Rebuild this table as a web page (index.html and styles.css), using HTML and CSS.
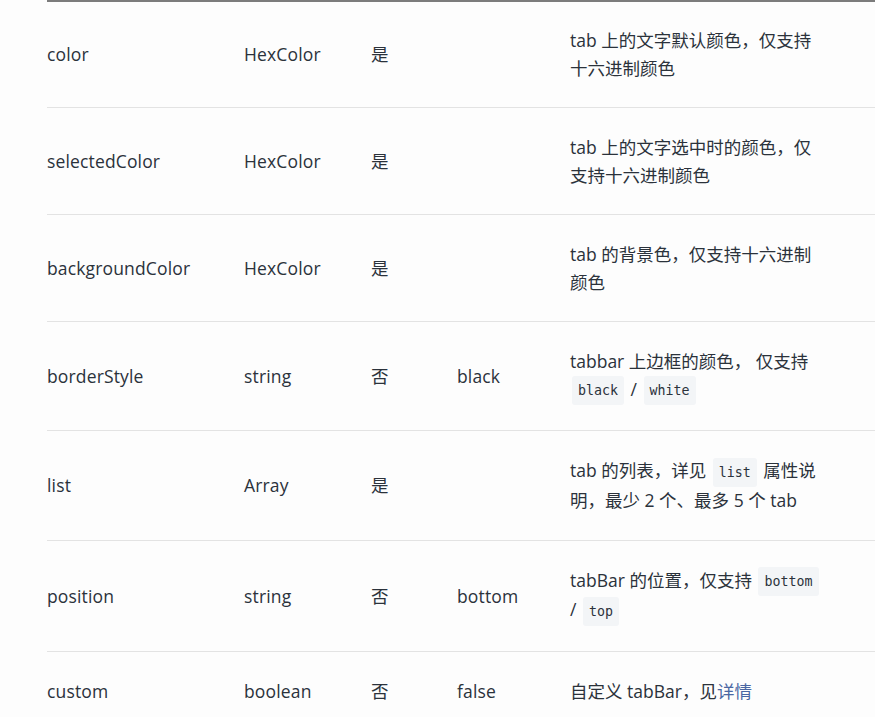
FILE: index.html
```html
<!DOCTYPE html>
<html lang="zh-CN">
<head>
<meta charset="utf-8">
<link rel="stylesheet" href="styles.css">
</head>
<body>
<div class="wrap">
<table class="props">
  <colgroup>
    <col class="c-name"><col class="c-type"><col class="c-req"><col class="c-def"><col class="c-desc">
  </colgroup>
  <tbody>
    <tr><td>color</td><td>HexColor</td><td>是</td><td></td><td><div class="desc">tab 上的文字默认颜色，仅支持十六进制颜色</div></td></tr>
    <tr><td>selectedColor</td><td>HexColor</td><td>是</td><td></td><td><div class="desc">tab 上的文字选中时的颜色，仅支持十六进制颜色</div></td></tr>
    <tr><td>backgroundColor</td><td>HexColor</td><td>是</td><td></td><td><div class="desc">tab 的背景色，仅支持十六进制颜色</div></td></tr>
    <tr><td>borderStyle</td><td>string</td><td>否</td><td>black</td><td><div class="desc">tabbar 上边框的颜色， 仅支持 <code>black</code> / <code>white</code></div></td></tr>
    <tr><td>list</td><td>Array</td><td>是</td><td></td><td><div class="desc">tab 的列表，详见 <code>list</code> 属性说明，最少 2 个、最多 5 个 tab</div></td></tr>
    <tr><td>position</td><td>string</td><td>否</td><td>bottom</td><td><div class="desc">tabBar 的位置，仅支持 <code>bottom</code> / <code>top</code></div></td></tr>
    <tr><td>custom</td><td>boolean</td><td>否</td><td>false</td><td><div class="desc">自定义 tabBar，见<a href="#">详情</a></div></td></tr>
  </tbody>
</table>
</div>
</body>
</html>
```
FILE: styles.css
```css
html, body {
  margin: 0;
  padding: 0;
  background: #fdfdfd;
  overflow: hidden;
}
body {
  font-family: "Open Sans", "Noto Sans CJK SC", sans-serif;
  font-size: 17.5px;
  line-height: 27.5px;
  color: #2b323b;
}
.wrap {
  padding-left: 47px;
}
.props {
  width: 828px;
  table-layout: fixed;
  border-collapse: collapse;
  border-top: 2px solid #7c7c7c;
}
.c-name { width: 197px; }
.c-type { width: 127px; }
.c-req { width: 86px; }
.c-def { width: 113px; }
.c-desc { width: 305px; }
.props td {
  padding: 26px 0 25px 0;
  vertical-align: middle;
  border-bottom: 1px solid #e3e3e3;
  white-space: nowrap;
  letter-spacing: 0.15px;
}
.props tr:first-child td {
  padding-top: 25px;
}
.props td .desc {
  width: 252px;
  white-space: normal;
  letter-spacing: 0;
}
code {
  display: inline-block;
  font-family: "DejaVu Sans Mono", monospace;
  font-size: 13.3px;
  line-height: 19px;
  background: #f3f5f7;
  padding: 5px 6px;
  border-radius: 3px;
  margin: 0 2px;
  vertical-align: middle;
}
a {
  color: #4a67a3;
  text-decoration: none;
}
```
